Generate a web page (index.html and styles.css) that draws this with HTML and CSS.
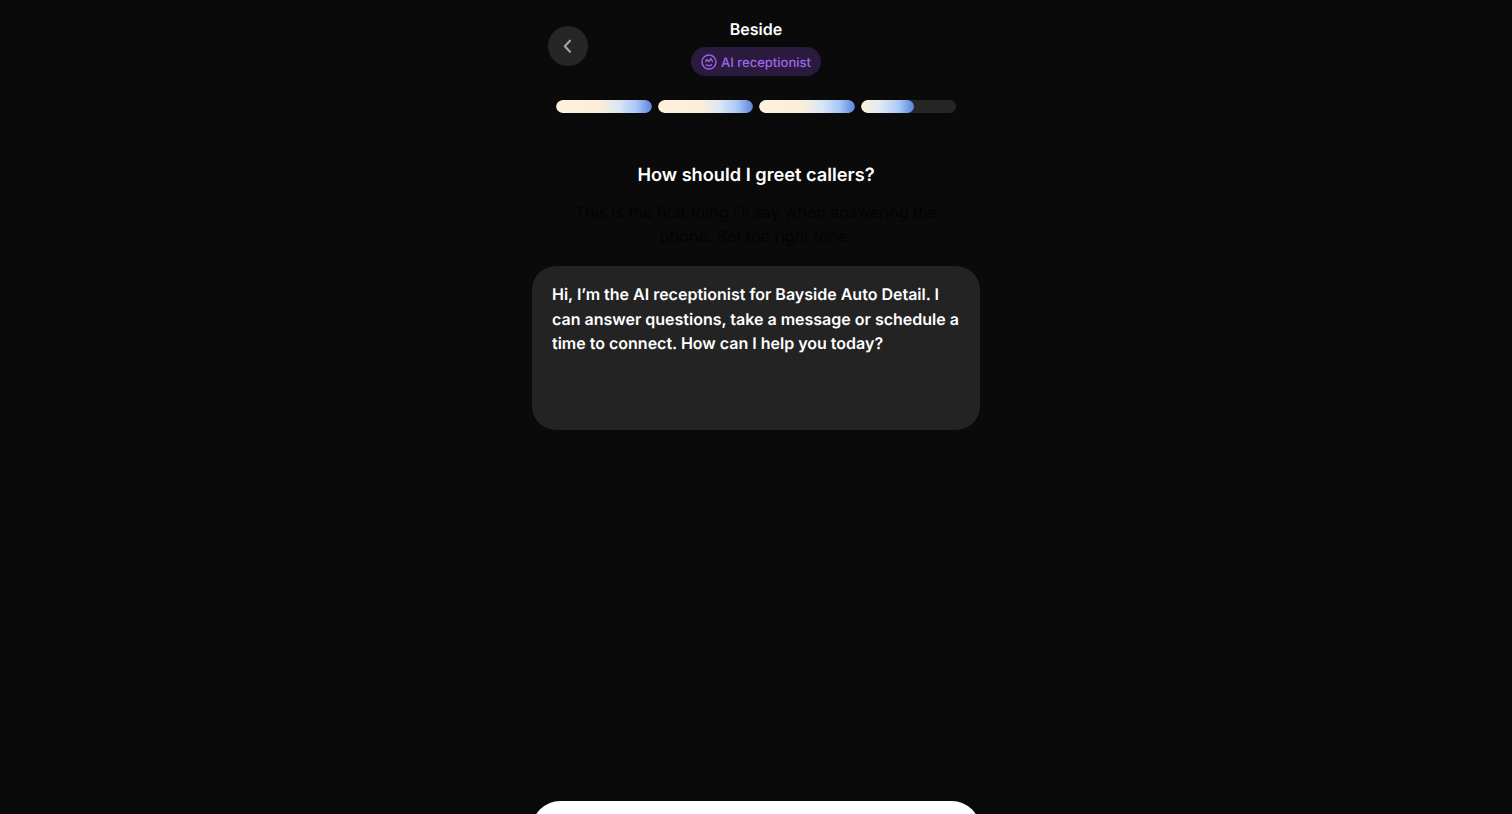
FILE: index.html
```html
<!DOCTYPE html>
<html lang="en">
<head>
<meta charset="utf-8">
<title>Beside</title>
<link rel="stylesheet" href="styles.css">
</head>
<body>
<div class="app">
  <div class="content">
    <header class="header">
      <button class="back" aria-label="Back">
        <svg width="24" height="24" viewBox="0 0 24 24" fill="none" stroke="#a3a3a3" stroke-width="2.200" stroke-linecap="round" stroke-linejoin="round"><path d="M14 6.700 8.800 12.200 14 17.700"/></svg>
      </button>
      <div class="titles">
        <div class="title">Beside</div>
        <div class="pill">
          <svg class="pill-icon" viewBox="0 0 16 16" fill="none" stroke="#9f5fe8" stroke-width="1.400" stroke-linecap="round" stroke-linejoin="round"><circle cx="8" cy="8" r="7"/><path d="M4.500 7.500 6 5.500 8 7.500l2-3 1.500 3"/><path d="M5.500 10.800c1.500 1 3.500 1 5 0"/></svg>
          <span class="pill-text">AI receptionist</span>
        </div>
      </div>
    </header>
    <div class="progress">
      <div class="seg"><div class="fill full"></div></div>
      <div class="seg"><div class="fill full"></div></div>
      <div class="seg"><div class="fill full"></div></div>
      <div class="seg"><div class="fill part"></div></div>
    </div>
    <h1 class="heading">How should I greet callers?</h1>
    <p class="sub">This is the first thing I’ll say when answering the phone. Set the right tone.</p>
    <div class="card">Hi, I’m the AI receptionist for Bayside Auto Detail. I can answer questions, take a message or schedule a time to connect. How can I help you today?</div>
  </div>
  <button class="cta" aria-label="Continue"></button>
</div>
</body>
</html>
```
FILE: styles.css
```css
* { box-sizing: border-box; }
html, body { margin: 0; height: 100%; background: #0a0a0a; }
body { font-family: Inter, "Liberation Sans", sans-serif; color: #fff; overflow: hidden; text-rendering: geometricPrecision; }
.app { width: 448px; height: 814px; margin: 0 auto; overflow: hidden; }
.content { height: 801px; display: flex; flex-direction: column; }
.header { display: flex; align-items: center; justify-content: center; position: relative; height: 76px; padding-top: 18px; }
.back { position: absolute; left: 16px; top: 26px; width: 40px; height: 40px; border: 0; border-radius: 50%; background: #262626; display: flex; align-items: center; justify-content: center; padding: 0; }
.titles { display: flex; flex-direction: column; align-items: center; gap: 6px; }
.title { font-size: 16px; font-weight: 600; line-height: 22px; margin-bottom: 1px; }
.pill { display: flex; align-items: center; gap: 4px; height: 29px; padding: 0 10px; border-radius: 15px; background: #2a1a3d; color: #a066ea; font-size: 13px; font-weight: 500; }
.pill-text { padding-top: 2px; }
.pill-icon { width: 16px; height: 16px; }
.progress { display: flex; gap: 6px; margin: 24px 24px 0; }
.seg { flex: 1; height: 13px; border-radius: 7px; background: #262626; overflow: hidden; }
.fill { height: 100%; border-radius: 7px; }
.full { width: 100%; background: linear-gradient(90deg, #fdf0dc 0%, #fbeeda 46%, #d8e6f5 66%, #a8c6f6 84%, #5a82dc 100%); }
.part { width: 56%; background: linear-gradient(90deg, #fdf0dc 0%, #e4ebf2 34%, #a9c8f8 72%, #5a82dc 100%); }
.heading { margin: 49px 0 0; font-size: 18.200px; line-height: 27px; font-weight: 600; text-align: center; }
.sub { margin: 10.700px 32px 0; font-size: 16px; line-height: 24.500px; color: #030303; text-align: center; }
.card { margin-top: 17.400px; height: 164px; padding: 16px 20px; border-radius: 24px; background: #232323; font-size: 16px; line-height: 24.500px; font-weight: 600; }
.cta { display: block; width: 448px; height: 56px; border: 0; border-radius: 28px; background: #fff; }
```
